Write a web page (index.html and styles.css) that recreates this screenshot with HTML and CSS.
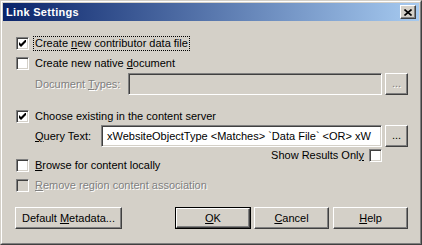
FILE: index.html
```html
<!DOCTYPE html>
<html>
<head>
<meta charset="utf-8">
<link rel="stylesheet" href="styles.css">
</head>
<body>
<div class="window">
  <div class="frame">
    <div class="titlebar">
      <span class="title">Link Settings</span>
      <span class="close"><svg width="8" height="7" viewBox="0 0 8 7"><path d="M0.5 0.5 L7.5 6.5 M7.5 0.5 L0.5 6.5" stroke="#000" stroke-width="1.6" fill="none"/></svg></span>
    </div>
    <div class="content">
      <div class="cb-row r1">
        <span class="cb"><svg class="check" width="7" height="7" viewBox="0 0 7 7"><path d="M0 2 L2 4 L6 0 L7 0 L7 2 L2 7 L0 5 Z" fill="#000"/></svg></span>
        <span class="lbl focus">Create <u>n</u>ew contributor data file</span>
      </div>
      <div class="cb-row r2">
        <span class="cb"></span>
        <span class="lbl">Create new native <u>d</u>ocument</span>
      </div>
      <div class="field-row doc">
        <span class="flabel doc-label disabled-text"><span>Document <u>T</u>ypes:</span></span>
        <span class="input disabled-input"></span>
        <span class="btn dots disabled-text"><span>...</span></span>
      </div>
      <div class="cb-row r3">
        <span class="cb"><svg class="check" width="7" height="7" viewBox="0 0 7 7"><path d="M0 2 L2 4 L6 0 L7 0 L7 2 L2 7 L0 5 Z" fill="#000"/></svg></span>
        <span class="lbl">Choose existing in the content server</span>
      </div>
      <div class="field-row query">
        <span class="flabel query-label"><span><u>Q</u>uery Text:</span></span>
        <span class="input"><span class="itext">xWebsiteObjectType &lt;Matches&gt; `Data File` &lt;OR&gt; xW</span></span>
        <span class="btn dots"><span>...</span></span>
      </div>
      <div class="show-row">
        <span class="lbl">Show Results Onl<u>y</u></span>
        <span class="cb"></span>
      </div>
      <div class="cb-row r4">
        <span class="cb"></span>
        <span class="lbl"><u>B</u>rowse for content locally</span>
      </div>
      <div class="cb-row r5">
        <span class="cb cb-disabled"></span>
        <span class="lbl disabled-text"><u>R</u>emove region content association</span>
      </div>
      <div class="buttons">
        <span class="btn wide"><span>Default <u>M</u>etadata...</span></span>
        <span class="spacer"></span>
        <span class="default-wrap"><span class="btn ok"><span><u>O</u>K</span></span></span>
        <span class="btn std"><span><u>C</u>ancel</span></span>
        <span class="btn std last"><span><u>H</u>elp</span></span>
      </div>
    </div>
  </div>
</div>
</body>
</html>
```
FILE: styles.css
```css
html, body {
  margin: 0;
  padding: 0;
  background: #d4d0c8;
}
body {
  font-family: "Liberation Sans", Arial, sans-serif;
  font-size: 11px;
  color: #000;
}
.window {
  width: 422px;
  height: 245px;
  box-sizing: border-box;
  border: 1px solid;
  border-color: #d4d0c8 #404040 #404040 #d4d0c8;
}
.frame {
  height: 100%;
  box-sizing: border-box;
  border: 1px solid;
  border-color: #fff #808080 #808080 #fff;
  padding: 1px;
}
.titlebar {
  height: 18px;
  background: linear-gradient(to right, #0a246a, #a6caf0);
  display: flex;
  align-items: center;
  justify-content: space-between;
  padding: 0 3px 0 3px;
}
.title {
  color: #fff;
  font-weight: bold;
  font-size: 11px;
  letter-spacing: 0.3px;
}
.close {
  width: 16px;
  height: 14px;
  box-sizing: border-box;
  background: #d4d0c8;
  border: 1px solid;
  border-color: #fff #404040 #404040 #fff;
  box-shadow: inset -1px -1px #808080;
  display: flex;
  align-items: center;
  justify-content: center;
}
.close svg { display: block; margin-left: -1px; }
.content {
  padding: 16px 11px 0 13px;
}
.cb-row {
  display: flex;
  align-items: center;
  height: 13px;
}
.r2, .r5 { margin-top: 7px; }
.r3 { margin-top: 15px; }
.r4 { margin-top: -3px; }
.cb {
  width: 13px;
  height: 13px;
  box-sizing: border-box;
  flex: none;
  background: #fff;
  border: 1px solid;
  border-color: #808080 #fff #fff #808080;
  box-shadow: inset 1px 1px #404040, inset -1px -1px #d4d0c8;
  display: flex;
  align-items: center;
  justify-content: center;
}
.cb-disabled { background: #d4d0c8; }
.check { display: block; }
.lbl {
  margin-left: 4px;
  padding: 0 1px;
  border: 1px dotted transparent;
  line-height: 13px;
  white-space: nowrap;
}
.focus { border-color: #000; }
.disabled-text {
  color: #808080;
  text-shadow: 1px 1px 0 #fff;
}
.field-row {
  display: flex;
  align-items: stretch;
  height: 22px;
  padding-left: 19px;
}
.doc { margin-top: 3px; }
.query { margin-top: 2px; }
.flabel {
  display: flex;
  align-items: center;
  flex: none;
  white-space: nowrap;
}
.doc-label { width: 93px; }
.query-label { width: 66px; }
.input {
  flex: 1;
  min-width: 0;
  box-sizing: border-box;
  background: #fff;
  border: 1px solid;
  border-color: #808080 #fff #fff #808080;
  box-shadow: inset 1px 1px #404040, inset -1px -1px #d4d0c8;
  display: flex;
  align-items: center;
  overflow: hidden;
  padding: 0 2px 0 5px;
}
.disabled-input { background: #d4d0c8; }
.itext {
  white-space: nowrap;
}
.btn {
  box-sizing: border-box;
  background: #d4d0c8;
  border: 1px solid;
  border-color: #fff #404040 #404040 #fff;
  box-shadow: inset -1px -1px #808080;
  display: flex;
  align-items: center;
  justify-content: center;
  white-space: nowrap;
  flex: none;
}
.dots {
  width: 23px;
  margin-left: 3px;
  padding-bottom: 2px;
}
.show-row {
  display: flex;
  justify-content: flex-end;
  align-items: center;
  height: 13px;
  margin-top: 2px;
  padding-right: 26px;
}
.show-row .lbl { margin-left: 0; margin-right: 3px; }
.buttons {
  display: flex;
  margin-top: 15px;
  margin-left: -1px;
  height: 22px;
}
.wide { width: 107px; }
.spacer { flex: 1; }
.default-wrap {
  display: flex;
  width: 76px;
  box-sizing: border-box;
  border: 1px solid #000;
}
.ok { flex: 1; }
.std { width: 75px; margin-left: 3px; }
.last { margin-left: 4px; }
```
